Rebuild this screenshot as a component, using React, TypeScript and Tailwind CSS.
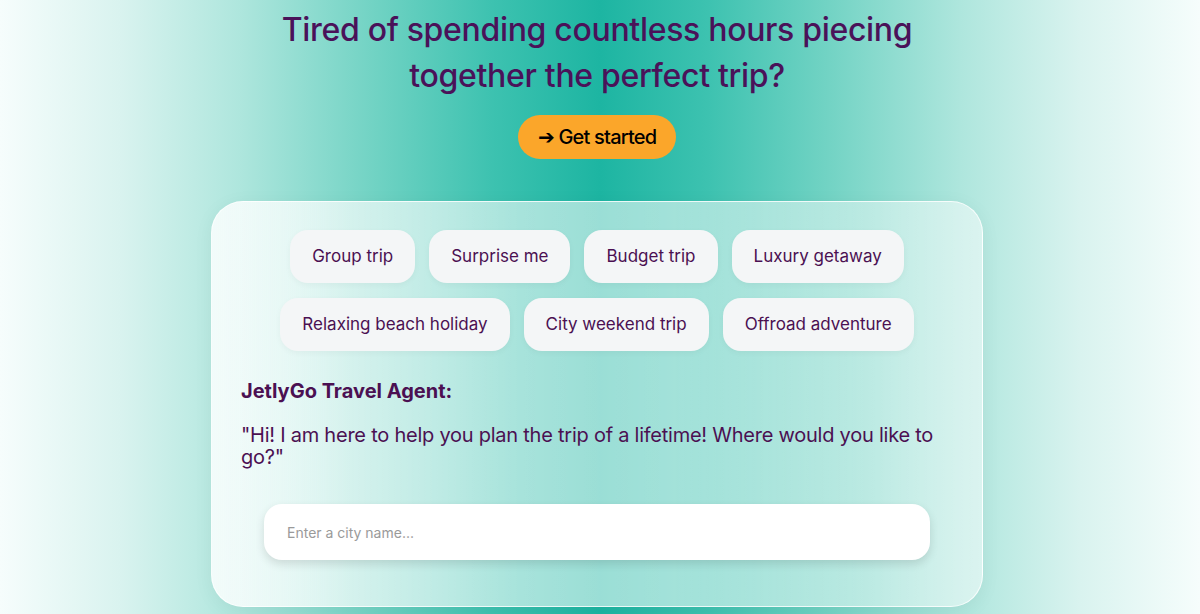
const chipsTop = ["Group trip", "Surprise me", "Budget trip", "Luxury getaway"];
const chipsBottom = ["Relaxing beach holiday", "City weekend trip", "Offroad adventure"];

function Chip({ label }: { label: string }) {
    return (
        <button className="h-[53px] px-[22px] rounded-[18px] bg-[#f4f6f7] text-[17px] text-[#4b1052] shadow-[0_2px_6px_rgba(0,0,0,0.04)] whitespace-nowrap">
            {label}
        </button>
    );
}

export default function App() {
    return (
        <div
            className="w-[1200px] h-[614px] overflow-hidden flex flex-col items-center pr-[6px] bg-[linear-gradient(to_right,#f6fdfc_0%,#d9f3ef_10%,#aee6dd_20%,#72d3c4_31%,#3dc2b0_41%,#1db5a2_50%,#3dc2b0_59%,#72d3c4_69%,#aee6dd_80%,#d9f3ef_90%,#f6fdfc_100%)] font-['Inter',sans-serif]"
        >
            {/* Hero */}
            <h1 className="mt-[7px] text-center text-[32px] font-medium leading-[46px] tracking-[-0.01em] text-[#4a1259]">
                Tired of spending countless hours piecing
                <br />
                together the perfect trip?
            </h1>

            <button className="mt-[16px] h-[44px] w-[158px] rounded-full bg-[#fba62a] text-[20px] font-medium tracking-[-0.04em] text-black">
                ➔ Get started
            </button>

            {/* Chat card */}
            <div className="mt-[42px] w-[772px] h-[406px] shrink-0 rounded-[32px] border border-white/80 bg-[linear-gradient(to_right,rgba(245,252,251,0.95)_0%,rgba(255,255,255,0.68)_18%,rgba(255,255,255,0.57)_40%,rgba(255,255,255,0.55)_60%,rgba(255,255,255,0.45)_85%,rgba(255,255,255,0.5)_100%)] shadow-[0_4px_20px_rgba(0,0,0,0.05)] px-[29px] pt-[28px]">

                <div className="flex flex-col items-center gap-[15px]">
                    <div className="flex gap-[14px] justify-center">
                        {chipsTop.map((c) => <Chip key={c} label={c} />)}
                    </div>
                    <div className="flex gap-[14px] justify-center">
                        {chipsBottom.map((c) => <Chip key={c} label={c} />)}
                    </div>
                </div>

                <h2 className="mt-[25px] text-[20px] font-bold text-[#4b1052]">JetlyGo Travel Agent:</h2>
                <p className="mt-[18px] text-[20px] leading-[22px] text-[#4b1052] tracking-[-0.012em]">
                    "Hi! I am here to help you plan the trip of a lifetime! Where would you like to go?"
                </p>

                <div className="mt-[36px] mx-[23px] h-[56px] rounded-[18px] bg-white shadow-[0_4px_10px_rgba(0,0,0,0.12)] flex items-center px-[23px]">
                    <input
                        type="text"
                        placeholder="Enter a city name..."
                        className="w-full bg-transparent outline-none text-[14px] text-[#333] placeholder:text-[#9a9a9a]"
                    />
                </div>
            </div>
        </div>
    );
}
